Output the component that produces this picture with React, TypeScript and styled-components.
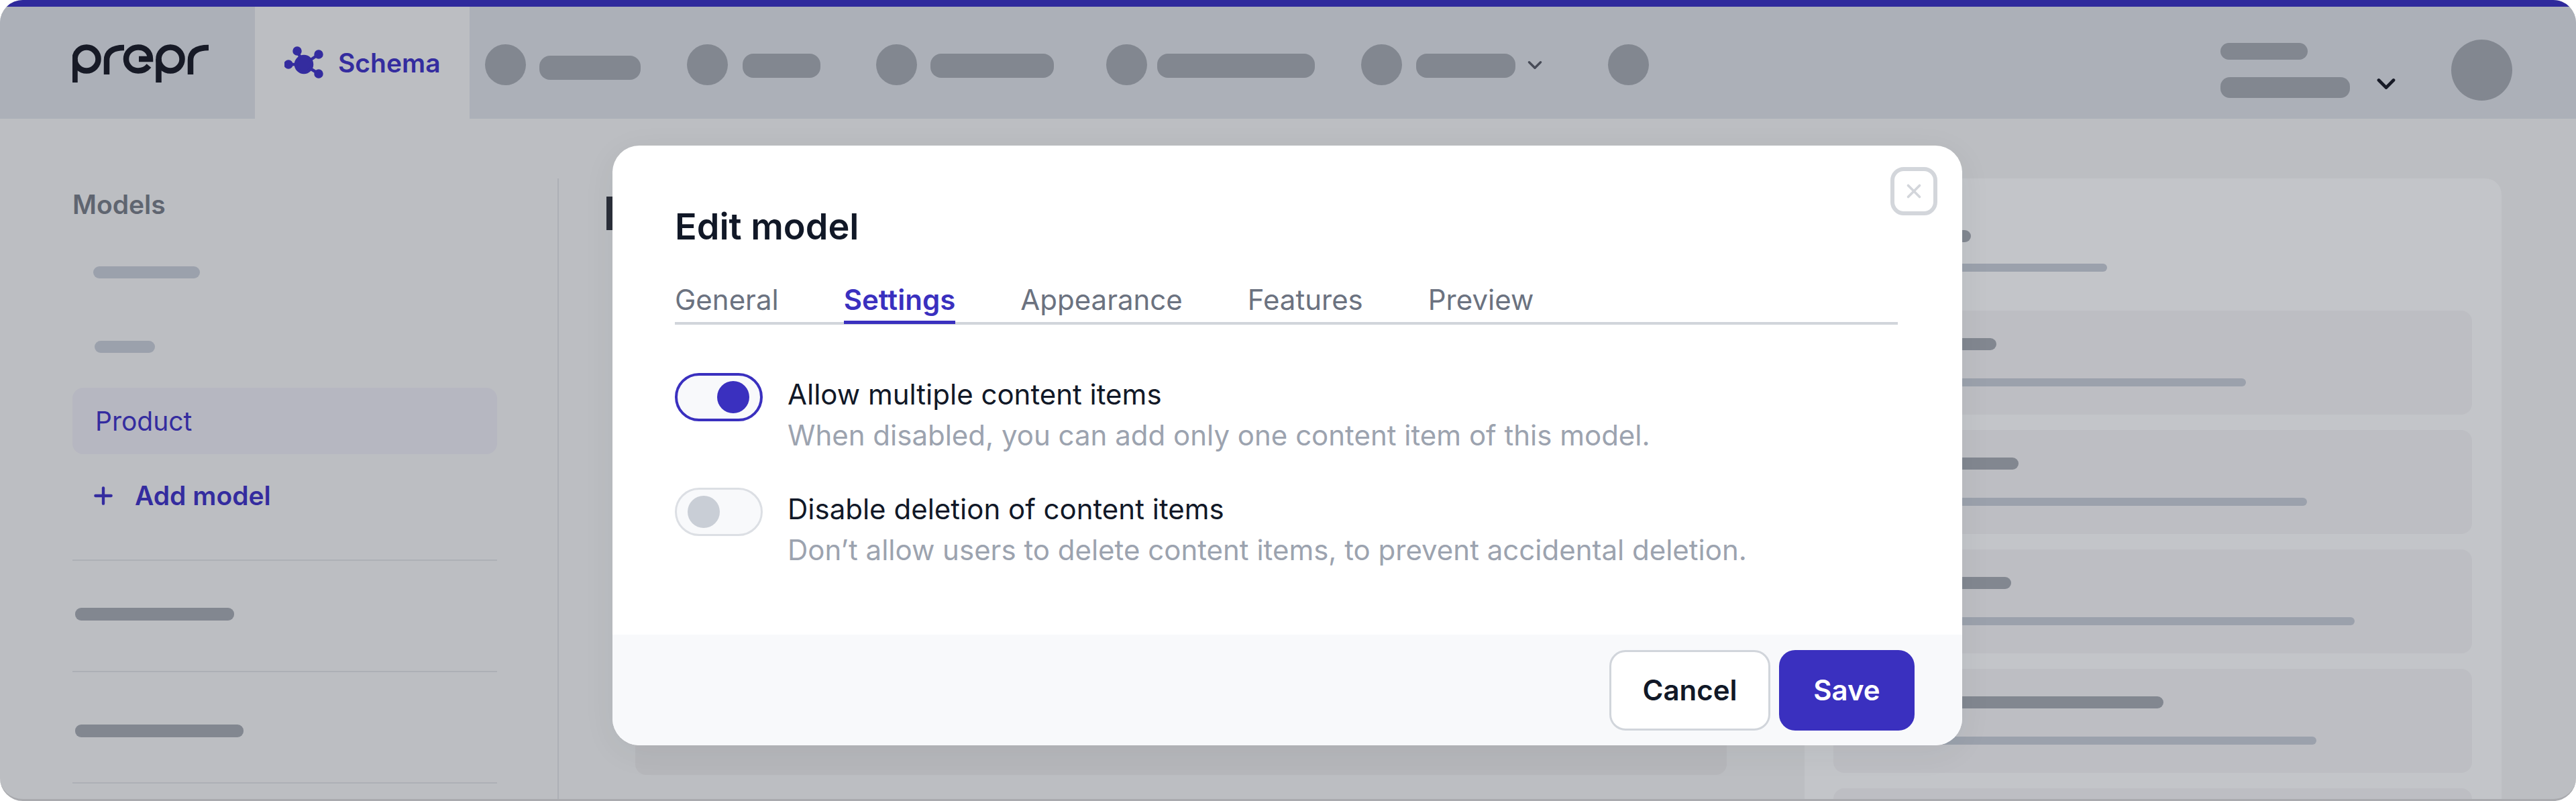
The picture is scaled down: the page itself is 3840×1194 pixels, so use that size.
import React from 'react';
import styled, { createGlobalStyle } from 'styled-components';
import { ChevronDown, Plus, X } from 'lucide-react';

const GlobalStyle = createGlobalStyle`
  html, body {
    margin: 0;
    padding: 0;
    background: #ffffff;
    font-family: Inter, 'Liberation Sans', sans-serif;
  }
`;

const INDIGO = '#3a30bf';
const DIM_INDIGO = '#342c9f';

const navGroups = [
  { offset: 23, gap: 20, pill: 151, drop: 9 },
  { offset: 69, gap: 22, pill: 116 },
  { offset: 83, gap: 20, pill: 184 },
  { offset: 78, gap: 15, pill: 235 },
  { offset: 69, gap: 21, pill: 148, chevron: true },
  { offset: 92, gap: 0, pill: 0 },
];

const panelCards = [
  { title: 206, text: 578 },
  { title: 239, text: 669 },
  { title: 228, text: 740 },
  { title: 455, text: 683 },
  { title: 300, text: 500 },
];

const tabs = ['General', 'Settings', 'Appearance', 'Features', 'Preview'];

const PreprLogo = () => (
  <LogoSvg viewBox="0 0 204 58" aria-label="prepr" role="img">
    <circle cx="21" cy="22" r="17.5" />
    <path d="M3.5 22 V57" />
    <path d="M51 45 V24 C51 12 59 5 77 5" />
    <path d="M99 22 H116 C116 11 108 4.500 98 4.500 C88 4.500 80 12 80 22 C80 32 88 39.500 98 39.500 C105 39.500 110 37 114 32" />
    <circle cx="146" cy="22" r="17.500" />
    <path d="M128.500 22 V57" />
    <path d="M176 45 V24 C176 12 184 5 203 5" />
  </LogoSvg>
);

const SchemaIcon = () => (
  <IconSvg viewBox="0 0 60 50">
    <path d="M29 27 L19 7 M29 27 L51 12 M29 27 L6 27 M29 27 L51 41" />
    <circle cx="29" cy="27" r="12" />
    <circle cx="19" cy="7" r="4.500" />
    <circle cx="51" cy="12" r="4.500" />
    <circle cx="6" cy="27" r="4.500" />
    <circle cx="51" cy="41" r="4.500" />
  </IconSvg>
);

export default function App() {
  return (
    <>
      <GlobalStyle />
      <Frame>
        <TopStrip />
        <NavBar>
          <LogoCell>
            <PreprLogo />
          </LogoCell>
          <ActiveTab>
            <SchemaIcon />
            Schema
          </ActiveTab>
          {navGroups.map((group, i) => (
            <NavGroup key={i} $offset={group.offset} $gap={group.gap}>
              <NavDot />
              {group.pill > 0 && <NavPill $width={group.pill} $drop={group.drop} />}
              {group.chevron && (
                <SmallChevron>
                  <ChevronDown size={34} strokeWidth={2.4} />
                </SmallChevron>
              )}
            </NavGroup>
          ))}
          <UserBlock>
            <UserLines>
              <UserPill $width={130} $height={25} />
              <UserPill $width={193} $height={31} />
            </UserLines>
            <UserChevron>
              <ChevronDown size={44} strokeWidth={2.6} />
            </UserChevron>
            <Avatar />
          </UserBlock>
        </NavBar>

        <Main>
          <Sidebar>
            <SidebarTitle>Models</SidebarTitle>
            <ModelList>
              <ModelRow>
                <ModelBar $width={159} $left={31} />
              </ModelRow>
              <ModelRow>
                <ModelBar $width={90} $left={33} />
              </ModelRow>
              <ModelRow $active>Product</ModelRow>
              <AddModel>
                <Plus size={40} strokeWidth={2.6} />
                Add model
              </AddModel>
            </ModelList>
            <SidebarSection $pad={70}>
              <SectionBar $width={237} />
            </SidebarSection>
            <SidebarSection $pad={78}>
              <SectionBar $width={251} />
            </SidebarSection>
            <SidebarSection $pad={0} />
          </Sidebar>

          <Content>
            <TitleStem />
            <ContentCard />
          </Content>

          <SidePanel>
            <PanelTitleBar $width={168} />
            <PanelTextBar $width={371} $gap={32} />
            <PanelCards>
              {panelCards.map((card, i) => (
                <PanelCard key={i}>
                  <PanelTitleBar $width={card.title} />
                  <PanelTextBar $width={card.text} $gap={42} />
                </PanelCard>
              ))}
            </PanelCards>
          </SidePanel>
        </Main>

        <Modal>
          <CloseButton aria-label="Close">
            <X size={34} strokeWidth={2.6} />
          </CloseButton>
          <ModalBody>
            <ModalTitle>Edit model</ModalTitle>
            <Tabs>
              {tabs.map((tab) => (
                <Tab key={tab} $active={tab === 'Settings'}>
                  {tab}
                </Tab>
              ))}
            </Tabs>
            <Options>
              <Option>
                <Toggle $on>
                  <Knob $on />
                </Toggle>
                <OptionText>
                  <OptionLabel>Allow multiple content items</OptionLabel>
                  <OptionHint>When disabled, you can add only one content item of this model.</OptionHint>
                </OptionText>
              </Option>
              <Option>
                <Toggle>
                  <Knob />
                </Toggle>
                <OptionText>
                  <OptionLabel>Disable deletion of content items</OptionLabel>
                  <OptionHint>Don’t allow users to delete content items, to prevent accidental deletion.</OptionHint>
                </OptionText>
              </Option>
            </Options>
          </ModalBody>
          <ModalFooter>
            <CancelButton>Cancel</CancelButton>
            <SaveButton>Save</SaveButton>
          </ModalFooter>
        </Modal>
      </Frame>
    </>
  );
}

const Frame = styled.div`
  position: relative;
  width: 3840px;
  height: 1194px;
  display: flex;
  flex-direction: column;
  overflow: hidden;
  border-radius: 34px;
  background: #bcbec2;
  border-bottom: 3px solid #a9aaae;
  box-sizing: border-box;
`;

const TopStrip = styled.div`
  height: 10px;
  flex: none;
  background: #2f2a9c;
`;

const NavBar = styled.div`
  height: 167px;
  flex: none;
  display: flex;
  align-items: center;
  background: #acb0b8;
`;

const LogoCell = styled.div`
  width: 380px;
  height: 100%;
  flex: none;
  box-sizing: border-box;
  padding: 56px 0 0 108px;
`;

const LogoSvg = styled.svg`
  display: block;
  width: 204px;
  height: 58px;
  fill: none;
  stroke: #171a26;
  stroke-width: 8.500;
`;

const ActiveTab = styled.div`
  width: 320px;
  height: 100%;
  flex: none;
  display: flex;
  align-items: center;
  box-sizing: border-box;
  padding-left: 44px;
  gap: 20px;
  background: #bcbec2;
  color: ${DIM_INDIGO};
  font-size: 39px;
  font-weight: 600;
`;

const IconSvg = styled.svg`
  width: 60px;
  height: 50px;
  flex: none;
  fill: ${DIM_INDIGO};
  stroke: ${DIM_INDIGO};
  stroke-width: 4.500;
`;

const NavGroup = styled.div<{ $offset: number; $gap: number }>`
  display: flex;
  align-items: center;
  margin-left: ${(p) => p.$offset}px;
  padding-top: 6px;
  gap: ${(p) => p.$gap}px;
`;

const NavDot = styled.div`
  width: 61px;
  height: 61px;
  border-radius: 50%;
  background: #828790;
`;

const NavPill = styled.div<{ $width: number; $drop?: number }>`
  width: ${(p) => p.$width}px;
  height: 36px;
  margin-top: ${(p) => p.$drop ?? 3}px;
  border-radius: 16px;
  background: #828790;
`;

const SmallChevron = styled.span`
  display: flex;
  margin-left: -9px;
  color: #474b57;
`;

const UserBlock = styled.div`
  margin-left: auto;
  display: flex;
  align-items: center;
  padding: 22px 95px 0 0;
`;

const UserLines = styled.div`
  width: 210px;
  display: flex;
  flex-direction: column;
  gap: 26px;
`;

const UserPill = styled.div<{ $width: number; $height: number }>`
  width: ${(p) => p.$width}px;
  height: ${(p) => p.$height}px;
  border-radius: 14px;
  background: #828790;
`;

const UserChevron = styled.span`
  display: flex;
  margin: 40px 0 0 15px;
  color: #171a26;
`;

const Avatar = styled.div`
  width: 91px;
  height: 91px;
  margin-left: 75px;
  border-radius: 50%;
  background: #828790;
`;

const Main = styled.div`
  flex: 1;
  min-height: 0;
  display: flex;
  padding: 89px 111px 0 0;
`;

const Sidebar = styled.div`
  width: 831px;
  flex: none;
  box-sizing: border-box;
  padding: 0 90px 0 108px;
`;

const SidebarTitle = styled.div`
  height: 76px;
  margin-bottom: 14px;
  display: flex;
  align-items: center;
  color: #5f6570;
  font-size: 39px;
  font-weight: 600;
`;

const ModelList = styled.div`
  display: flex;
  flex-direction: column;
  gap: 12px;
  margin-bottom: 46px;
`;

const ModelRow = styled.div<{ $active?: boolean }>`
  height: 99px;
  display: flex;
  align-items: center;
  box-sizing: border-box;
  padding-left: 34px;
  border-radius: 16px;
  font-size: 39px;
  color: ${DIM_INDIGO};
  background: ${(p) => (p.$active ? '#b6b7c1' : 'transparent')};
`;

const ModelBar = styled.div<{ $width: number; $left: number }>`
  width: ${(p) => p.$width}px;
  height: 18px;
  margin-left: ${(p) => p.$left - 34}px;
  border-radius: 9px;
  background: #9ba1ac;
`;

const AddModel = styled.div`
  height: 99px;
  display: flex;
  align-items: center;
  gap: 27px;
  padding-left: 26px;
  color: ${DIM_INDIGO};
  font-size: 39px;
  font-weight: 600;
`;

const SidebarSection = styled.div<{ $pad: number }>`
  height: 166px;
  box-sizing: border-box;
  padding: ${(p) => p.$pad}px 0 0 4px;
  border-top: 2px solid #adb0b6;
`;

const SectionBar = styled.div<{ $width: number }>`
  width: ${(p) => p.$width}px;
  height: 19px;
  border-radius: 9px;
  background: #828790;
`;

const Content = styled.div`
  flex: 1;
  min-width: 0;
  border-left: 2px solid #adb0b6;
  box-sizing: border-box;
  padding: 27px 0 0 71px;
`;

const TitleStem = styled.div`
  width: 12px;
  height: 50px;
  margin-bottom: 75px;
  background: #2b2e39;
`;

const ContentCard = styled.div`
  width: 1627px;
  height: 737px;
  margin-left: 43px;
  border-radius: 16px;
  background: #b6b7bb;
`;

const SidePanel = styled.div`
  width: 1039px;
  flex: none;
  box-sizing: border-box;
  padding: 77px 44px 0 80px;
  border-radius: 24px 24px 0 0;
  background: #c3c5c9;
`;

const PanelTitleBar = styled.div<{ $width: number }>`
  width: ${(p) => p.$width}px;
  height: 18px;
  border-radius: 9px;
  background: #828790;
`;

const PanelTextBar = styled.div<{ $width: number; $gap: number }>`
  width: ${(p) => p.$width}px;
  height: 12px;
  margin-top: ${(p) => p.$gap}px;
  border-radius: 6px;
  background: #9ba1ac;
`;

const PanelCards = styled.div`
  display: flex;
  flex-direction: column;
  gap: 23px;
  margin: 58px 0 0 -37px;
`;

const PanelCard = styled.div`
  height: 155px;
  flex: none;
  box-sizing: border-box;
  padding: 41px 0 0 37px;
  border-radius: 16px;
  background: #bdbec3;
`;

const Modal = styled.div`
  position: absolute;
  left: 913px;
  top: 217px;
  width: 2012px;
  height: 894px;
  display: flex;
  flex-direction: column;
  overflow: hidden;
  border-radius: 40px;
  background: #ffffff;
  box-shadow: 0 10px 50px rgba(40, 44, 54, 0.06);
`;

const CloseButton = styled.button`
  position: absolute;
  top: 32px;
  right: 37px;
  width: 70px;
  height: 72px;
  padding: 0;
  display: flex;
  align-items: center;
  justify-content: center;
  box-sizing: border-box;
  border: 6px solid #d3d6db;
  border-radius: 20px;
  background: #ffffff;
  color: #d3d6db;
`;

const ModalBody = styled.div`
  flex: 1;
  box-sizing: border-box;
  padding: 89px 96px 0 93px;
`;

const ModalTitle = styled.div`
  color: #111827;
  font-size: 54px;
  line-height: 64px;
  font-weight: 600;
`;

const Tabs = styled.div`
  display: flex;
  gap: 97px;
  margin-top: 52px;
  border-bottom: 4px solid #d1d5db;
`;

const Tab = styled.div<{ $active?: boolean }>`
  position: relative;
  height: 50px;
  padding-bottom: 8px;
  color: ${(p) => (p.$active ? INDIGO : '#6b7280')};
  font-size: 42px;
  line-height: 50px;
  font-weight: ${(p) => (p.$active ? 600 : 400)};

  &::after {
    content: '';
    display: ${(p) => (p.$active ? 'block' : 'none')};
    position: absolute;
    left: 0;
    right: 0;
    bottom: -3px;
    height: 5px;
    background: ${INDIGO};
  }
`;

const Options = styled.div`
  display: flex;
  flex-direction: column;
  gap: 47px;
  margin-top: 72px;
`;

const Option = styled.div`
  display: flex;
  gap: 37px;
`;

const Toggle = styled.div<{ $on?: boolean }>`
  width: 131px;
  height: 72px;
  flex: none;
  display: flex;
  align-items: center;
  justify-content: ${(p) => (p.$on ? 'flex-end' : 'flex-start')};
  box-sizing: border-box;
  padding: 0 16px;
  border: ${(p) => (p.$on ? `4px solid ${INDIGO}` : '3px solid #dcdfe4')};
  border-radius: 36px;
  background: #f8f9fb;
`;

const Knob = styled.div<{ $on?: boolean }>`
  width: 48px;
  height: 48px;
  border-radius: 50%;
  background: ${(p) => (p.$on ? INDIGO : '#c9ced6')};
`;

const OptionText = styled.div`
  display: flex;
  flex-direction: column;
`;

const OptionLabel = styled.div`
  margin-top: 2px;
  color: #111827;
  font-size: 42px;
  line-height: 60px;
`;

const OptionHint = styled.div`
  color: #9ca3af;
  font-size: 42px;
  line-height: 62px;
`;

const ModalFooter = styled.div`
  height: 165px;
  flex: none;
  display: flex;
  align-items: center;
  justify-content: flex-end;
  gap: 13px;
  box-sizing: border-box;
  padding-right: 71px;
  background: #f8f9fb;
`;

const CancelButton = styled.button`
  width: 240px;
  height: 120px;
  box-sizing: border-box;
  border: 3px solid #d1d5db;
  border-radius: 24px;
  background: #ffffff;
  color: #111827;
  font-family: inherit;
  font-size: 42px;
  font-weight: 600;
`;

const SaveButton = styled.button`
  width: 202px;
  height: 120px;
  border: 0;
  border-radius: 24px;
  background: ${INDIGO};
  color: #ffffff;
  font-family: inherit;
  font-size: 42px;
  font-weight: 600;
`;
